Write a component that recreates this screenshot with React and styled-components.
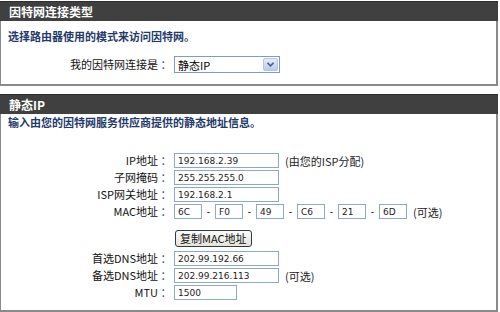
import React from 'react'
import styled, { createGlobalStyle } from 'styled-components'

const Global = createGlobalStyle`
  html, body {
    margin: 0;
    padding: 0;
    background: #ffffff;
  }
  body {
    font-family: "Liberation Sans", "Noto Sans CJK SC", sans-serif;
    font-size: 11px;
    color: #000;
  }
`

const Page = styled.div`
  width: 500px;
  height: 312px;
  overflow: hidden;
  padding-top: 1px;
  box-sizing: border-box;
`

const Panel = styled.section`
  width: 498px;
  box-sizing: border-box;
  border-left: 1px solid #8a8a8a;
  border-right: 2px solid #8a8a8a;
  border-bottom: 2px solid #8a8a8a;
  margin-bottom: ${p => p.gap || 0}px;
  background: #fff;
`

const PanelHead = styled.h2`
  margin: 0 -2px 0 -1px;
  height: 20px;
  line-height: 19px;
  background: #3f403f;
  border-top: 1px solid #2e2e2e;
  box-sizing: border-box;
  color: #ffffff;
  font-family: "Noto Sans CJK SC", sans-serif;
  font-size: 12px;
  font-weight: bold;
  padding-left: 9px;
`

const PanelBody = styled.div`
  padding: ${p => p.pad || '0 0 10px 0'};
`

const Intro = styled.p`
  margin: 0 0 0 7px;
  color: #1f3a6b;
  font-family: "Noto Sans CJK SC", sans-serif;
  font-size: 11px;
  font-weight: bold;
  line-height: 16px;
`

const Form = styled.div`
  display: grid;
  grid-template-columns: 157px 16px 1fr;
  row-gap: 2px;
  align-items: center;
  margin-top: ${p => p.top || 0}px;
`

const Label = styled.span`
  text-align: right;
  font-family: "Noto Sans CJK SC", sans-serif;
  font-size: 11px;
  line-height: 15px;
  white-space: nowrap;
  color: #111;
`

const Colon = styled.span`
  text-align: center;
  font-family: "Noto Sans CJK SC", sans-serif;
  font-size: 11px;
  line-height: 15px;
  color: #2b4f8f;
`

const Field = styled.div`
  display: flex;
  align-items: ${p => p.align || 'center'};
  height: ${p => p.h || 15}px;
`

const TextInput = styled.input`
  box-sizing: border-box;
  width: ${p => p.w || 105}px;
  height: 15px;
  margin: 0;
  padding: 0 3px;
  border: 1px solid #8fa8c8;
  background: #fff;
  font-family: "DejaVu Sans", sans-serif;
  font-size: 9px;
  color: #222;
  outline: none;
`

const Note = styled.span`
  margin-left: 6px;
  font-family: "Noto Sans CJK SC", sans-serif;
  font-size: 11px;
  color: #222;
  white-space: nowrap;
`

const Dash = styled.span`
  width: 13px;
  text-align: center;
  font-size: 10px;
  color: #222;
`

const Select = styled.div`
  box-sizing: border-box;
  width: 106px;
  height: 17px;
  border: 1px solid #7f9db9;
  display: flex;
  align-items: center;
  justify-content: space-between;
  padding-left: 3px;
  background: #fff;
  font-family: "Noto Sans CJK SC", sans-serif;
  font-size: 11px;
`

const SelectArrow = styled.span`
  width: 15px;
  height: 13px;
  margin-right: 1px;
  box-sizing: border-box;
  border: 1px solid #b1c6ef;
  border-radius: 2px;
  background: linear-gradient(#e3ebfc, #b7cbf4);
  display: flex;
  align-items: center;
  justify-content: center;
`

const Button = styled.button`
  box-sizing: border-box;
  height: 17px;
  padding: 0 4px;
  margin: 0 0 2px 1px;
  border: 1px solid #2f3a4a;
  border-radius: 3px;
  background: linear-gradient(#fbfbf8, #e4e3dc);
  font-family: "Noto Sans CJK SC", sans-serif;
  font-size: 11px;
  line-height: 13px;
  color: #111;
`

const Row = ({ label, children, h }) => (
  <>
    <Label>{label}</Label>
    <Colon>：</Colon>
    <Field h={h}>{children}</Field>
  </>
)

const mac = ['6C', 'F0', '49', 'C6', '21', '6D']

export default function App() {
  return (
    <Page>
      <Global />
      <Panel gap={8}>
        <PanelHead>因特网连接类型</PanelHead>
        <PanelBody pad="7px 0 11px 0">
          <Intro>选择路由器使用的模式来访问因特网。</Intro>
          <Form top={12}>
            <Row label="我的因特网连接是" h={17}>
              <Select>
                静态IP
                <SelectArrow>
                  <svg width="7" height="5" viewBox="0 0 7 5">
                    <path d="M0.5 0.8 L3.5 3.8 L6.5 0.8" fill="none" stroke="#4d6185" strokeWidth="1.6" />
                  </svg>
                </SelectArrow>
              </Select>
            </Row>
          </Form>
        </PanelBody>
      </Panel>
      <Panel>
        <PanelHead>静态IP</PanelHead>
        <PanelBody pad="0 0 10px 0">
          <Intro>输入由您的因特网服务供应商提供的静态地址信息。</Intro>
          <Form top={23}>
            <Row label="IP地址">
              <TextInput defaultValue="192.168.2.39" />
              <Note>(由您的ISP分配)</Note>
            </Row>
            <Row label="子网掩码">
              <TextInput defaultValue="255.255.255.0" />
            </Row>
            <Row label="ISP网关地址">
              <TextInput defaultValue="192.168.2.1" />
            </Row>
            <Row label="MAC地址">
              {mac.map((m, i) => (
                <React.Fragment key={m}>
                  {i > 0 && <Dash>-</Dash>}
                  <TextInput w={28} defaultValue={m} />
                </React.Fragment>
              ))}
              <Note>(可选)</Note>
            </Row>
            <span />
            <span />
            <Field h={28} align="flex-end">
              <Button>复制MAC地址</Button>
            </Field>
            <Row label="首选DNS地址">
              <TextInput defaultValue="202.99.192.66" />
            </Row>
            <Row label="备选DNS地址">
              <TextInput defaultValue="202.99.216.113" />
              <Note>(可选)</Note>
            </Row>
            <Row label="MTU">
              <TextInput w={63} defaultValue="1500" />
            </Row>
          </Form>
        </PanelBody>
      </Panel>
    </Page>
  )
}
